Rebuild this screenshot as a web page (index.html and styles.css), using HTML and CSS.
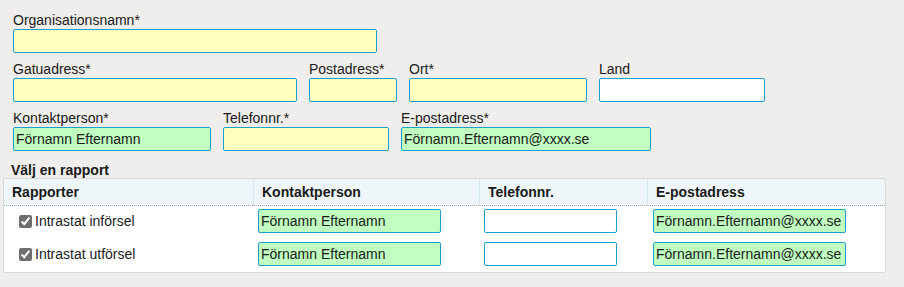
FILE: index.html
```html
<!DOCTYPE html>
<html lang="sv">
<head>
  <meta charset="UTF-8">
  <meta name="viewport" content="width=device-width, initial-scale=1.0">
  <title>Uppgiftslämnare</title>
  <link rel="stylesheet" href="styles.css">
</head>
<body>
  <div class="page">
    <div class="fields">
      <div class="row">
        <div class="field w-org">
          <label for="org">Organisationsnamn*</label>
          <input id="org" class="required" type="text">
        </div>
      </div>
      <div class="row">
        <div class="field w-street">
          <label for="street">Gatuadress*</label>
          <input id="street" class="required" type="text">
        </div>
        <div class="field w-zip">
          <label for="zip">Postadress*</label>
          <input id="zip" class="required" type="text">
        </div>
        <div class="field w-city">
          <label for="city">Ort*</label>
          <input id="city" class="required" type="text">
        </div>
        <div class="field w-country">
          <label for="country">Land</label>
          <input id="country" type="text">
        </div>
      </div>
      <div class="row">
        <div class="field w-contact">
          <label for="contact">Kontaktperson*</label>
          <input id="contact" class="filled" type="text" value="Förnamn Efternamn">
        </div>
        <div class="field w-phone">
          <label for="phone">Telefonnr.*</label>
          <input id="phone" class="required" type="text">
        </div>
        <div class="field w-email">
          <label for="email">E-postadress*</label>
          <input id="email" class="filled" type="text" value="Förnamn.Efternamn@xxxx.se">
        </div>
      </div>
    </div>

    <h2 class="section-title">Välj en rapport</h2>
    <table class="reports">
      <colgroup>
        <col class="c-report">
        <col class="c-contact">
        <col class="c-phone">
        <col class="c-email">
      </colgroup>
      <thead>
        <tr>
          <th>Rapporter</th>
          <th>Kontaktperson</th>
          <th>Telefonnr.</th>
          <th>E-postadress</th>
        </tr>
      </thead>
      <tbody>
        <tr>
          <td class="report"><label><input type="checkbox" checked>Intrastat införsel</label></td>
          <td><input class="filled t-contact" type="text" value="Förnamn Efternamn"></td>
          <td><input class="t-phone" type="text"></td>
          <td class="mail"><input class="filled t-email" type="text" value="Förnamn.Efternamn@xxxx.se"></td>
        </tr>
        <tr>
          <td class="report"><label><input type="checkbox" checked>Intrastat utförsel</label></td>
          <td><input class="filled t-contact" type="text" value="Förnamn Efternamn"></td>
          <td><input class="t-phone" type="text"></td>
          <td class="mail"><input class="filled t-email" type="text" value="Förnamn.Efternamn@xxxx.se"></td>
        </tr>
      </tbody>
    </table>
  </div>
</body>
</html>
```

FILE: styles.css
```css
body {
  margin: 0;
  background-color: #efeeec;
  font-family: "Liberation Sans", Arial, sans-serif;
  font-size: 14px;
  color: #1a1a1a;
}
.page {
  padding: 12px 18px 0 3px;
}
.fields {
  padding-left: 10px;
}
.row {
  display: flex;
  gap: 12px;
  margin-bottom: 8px;
}
.field {
  display: flex;
  flex-direction: column;
}
.field label {
  line-height: 16px;
  margin-bottom: 1px;
}
input[type="text"] {
  box-sizing: border-box;
  height: 24px;
  margin: 0;
  padding: 0 2px;
  border: 1px solid #1a9fcf;
  border-radius: 2px;
  background: #fff;
  font-family: inherit;
  font-size: 14px;
  color: #1a1a1a;
  outline: none;
}
input.required {
  background: #ffffc0;
}
input.filled {
  background: #c0ffc0;
}
.w-org input { width: 364px; }
.w-street input { width: 284px; }
.w-zip input { width: 88px; }
.w-city input { width: 178px; }
.w-country input { width: 166px; }
.w-contact input { width: 198px; }
.w-phone input { width: 166px; }
.w-email input { width: 250px; }

.section-title {
  margin: 11px 0 0 8px;
  font-size: 14px;
  line-height: 16px;
  font-weight: bold;
}
.reports {
  width: 883px;
  table-layout: fixed;
  border-collapse: separate;
  border-spacing: 0;
  border: 1px solid #d9d9d9;
  background: #fff;
}
.c-report { width: 249px; }
.c-contact { width: 226px; }
.c-phone { width: 168px; }
.c-email { width: 238px; }
.reports th {
  box-sizing: border-box;
  padding: 5px 8px;
  line-height: 16px;
  text-align: left;
  font-weight: bold;
  background: #eef6f9;
  border-bottom: 1px dotted #a8a8a8;
}
.reports th + th {
  border-left: 1px solid #d4e8f1;
}
.reports td {
  padding: 3px 5px 6px;
  vertical-align: middle;
}
.reports td.report {
  padding-left: 11px;
}
.reports td.mail {
  padding-left: 6px;
}
.report label {
  display: flex;
  align-items: center;
}
.report input {
  width: 13px;
  height: 13px;
  margin: 0 3px 0 4px;
  accent-color: #6f6f6f;
}
.t-contact { width: 183px; }
.t-phone { width: 133px; }
.t-email { width: 193px; }
```
